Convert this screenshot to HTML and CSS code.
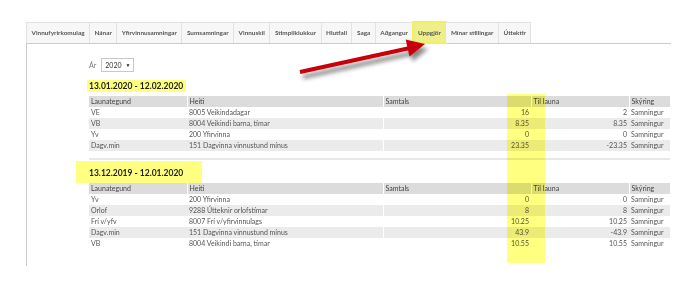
FILE: index.html
```html
<!DOCTYPE html>
<html lang="is">
<head>
    <meta charset="UTF-8">
    <title>Uppgjör</title>
    <link rel="stylesheet" href="styles.css">
</head>
<body>
    <div class="page">
        <ul class="tabs">
            <li>Vinnufyrirkomulag</li>
            <li>Nánar</li>
            <li>Yfirvinnusamningar</li>
            <li>Sumsamningar</li>
            <li>Vinnuskil</li>
            <li>Stimpilklukkur</li>
            <li>Hlutfall</li>
            <li>Saga</li>
            <li>Aðgangur</li>
            <li class="active">Uppgjör</li>
            <li>Mínar stillingar</li>
            <li>Úttektir</li>
        </ul>

        <div class="panel">
            <div class="year">
                <span class="year-label">Ár</span>
                <span class="select">2020 <span class="caret">&#9660;</span></span>
            </div>

            <h2 class="period">13.01.2020 - 12.02.2020</h2>
            <table>
                <tr><th class="c1">Launategund</th><th class="c2">Heiti</th><th class="c3">Samtals</th><th class="c4">Til launa</th><th class="c5">Skýring</th></tr>
                <tr><td>VE</td><td>8005 Veikindadagar</td><td class="num">16</td><td class="num">2</td><td>Samningur</td></tr>
                <tr><td>VB</td><td>8004 Veikindi barna, tímar</td><td class="num">8.35</td><td class="num">8.35</td><td>Samningur</td></tr>
                <tr><td>Yv</td><td>200 Yfirvinna</td><td class="num">0</td><td class="num">0</td><td>Samningur</td></tr>
                <tr><td>Dagv.min</td><td>151 Dagvinna vinnustund mínus</td><td class="num">23.35</td><td class="num">-23.35</td><td>Samningur</td></tr>
            </table>

            <div class="divider"></div>

            <h2 class="period period-big">13.12.2019 - 12.01.2020</h2>
            <table>
                <tr><th class="c1">Launategund</th><th class="c2">Heiti</th><th class="c3">Samtals</th><th class="c4">Til launa</th><th class="c5">Skýring</th></tr>
                <tr><td>Yv</td><td>200 Yfirvinna</td><td class="num">0</td><td class="num">0</td><td>Samningur</td></tr>
                <tr><td>Orlof</td><td>9288 Útteknir orlofstímar</td><td class="num">8</td><td class="num">8</td><td>Samningur</td></tr>
                <tr><td>Frí v/yfv</td><td>8007 Frí v/yfirvinnulags</td><td class="num">10.25</td><td class="num">10.25</td><td>Samningur</td></tr>
                <tr><td>Dagv.min</td><td>151 Dagvinna vinnustund mínus</td><td class="num">43.9</td><td class="num">-43.9</td><td>Samningur</td></tr>
                <tr><td>VB</td><td>8004 Veikindi barna, tímar</td><td class="num">10.55</td><td class="num">10.55</td><td>Samningur</td></tr>
            </table>
        </div>

        <!-- annotation overlays -->
        <div class="col-mark"></div>
        <svg class="arrow" width="160" height="50" viewBox="290 36 160 50">
            <g class="arrow-shadow" transform="translate(3,5)">
                <line x1="300" y1="72" x2="410" y2="48" stroke="#555" stroke-width="4"/>
                <polygon points="425,44 405.7,39.5 409.5,56.5" fill="#555"/>
            </g>
            <line x1="300" y1="72" x2="410" y2="48" stroke="#c8000a" stroke-width="4"/>
            <polygon points="425,44 405.7,39.5 409.5,56.5" fill="#c8000a"/>
        </svg>
    </div>
</body>
</html>
```

FILE: styles.css
```css
* {
    box-sizing: border-box;
}
body {
    margin: 0;
    padding: 0;
    background: #fff;
    font-family: Lato, "Open Sans", Arial, sans-serif;
    color: #555;
}
.page {
    position: relative;
    padding: 22px 0 0 26px;
    width: 680px;
    height: 283px;
}
.tabs {
    display: flex;
    list-style: none;
    margin: 0;
    padding: 0;
}
.tabs li {
    height: 21px;
    line-height: 20px;
    padding: 0 4.5px;
    font-size: 6.4px;
    font-weight: bold;
    color: #555;
    background: #f7f7f7;
    border: 1px solid #e2e2e2;
    border-bottom: none;
    border-left: none;
}
.tabs li:first-child {
    border-left: 1px solid #e2e2e2;
}
.tabs li.active {
    background: #eeee8a;
    outline: 2px solid #f0f060;
    outline-offset: -1px;
    color: #555;
}
.panel {
    width: 645px;
    height: 223px;
    border-top: 1px solid #ccc;
    border-left: 1px solid #ccc;
    padding: 14px 0 0 62px;
}
.year {
    display: flex;
    align-items: center;
    gap: 5px;
    height: 14px;
}
.year-label {
    font-size: 7px;
    color: #777;
}
.select {
    display: inline-flex;
    align-items: center;
    gap: 4px;
    height: 14px;
    padding: 0 3px;
    border: 1px solid #c8c8c8;
    font-size: 7px;
    color: #333;
}
.caret {
    font-size: 5px;
    color: #222;
}
.period {
    display: inline-block;
    margin: 8px 0 4px -2px;
    padding: 0 2px;
    height: 12px;
    line-height: 12px;
    width: 99px;
    background: #ffff80;
    font-size: 8.5px;
    font-weight: bold;
    color: #222;
}
.period-big {
    display: block;
    margin: 0 0 0 -13px;
    padding: 0 0 0 13px;
    width: 126px;
    height: 22px;
    line-height: 24px;
}
table {
    width: 581px;
    border-collapse: collapse;
    font-size: 7px;
    table-layout: fixed;
}
th, td {
    height: 11px;
    padding: 0 2px;
    text-align: left;
    white-space: nowrap;
    line-height: 11px;
}
th {
    background: #dcdcdc;
    color: #444;
    font-weight: normal;
    border-left: 1px solid #fff;
}
th:first-child {
    border-left: none;
}
td:nth-child(3) {
    border-left: 1px solid #fff;
}
tr:nth-child(odd) td {
    background: #ebebeb;
}
.c1 { width: 98px; }
.c2 { width: 196px; }
.c3 { width: 148px; }
.c4 { width: 98px; }
.c5 { width: 41px; }
td.num {
    text-align: right;
}
.divider {
    margin: 7px 0 1px;
    width: 581px;
    height: 2px;
    background: #e8e8e8;
}
.col-mark {
    position: absolute;
    left: 507px;
    top: 94px;
    width: 38px;
    height: 169px;
    background: #ffff80;
    mix-blend-mode: multiply;
}
.arrow {
    position: absolute;
    left: 290px;
    top: 36px;
}
.arrow-shadow {
    filter: blur(2px);
    opacity: 0.7;
}
```
